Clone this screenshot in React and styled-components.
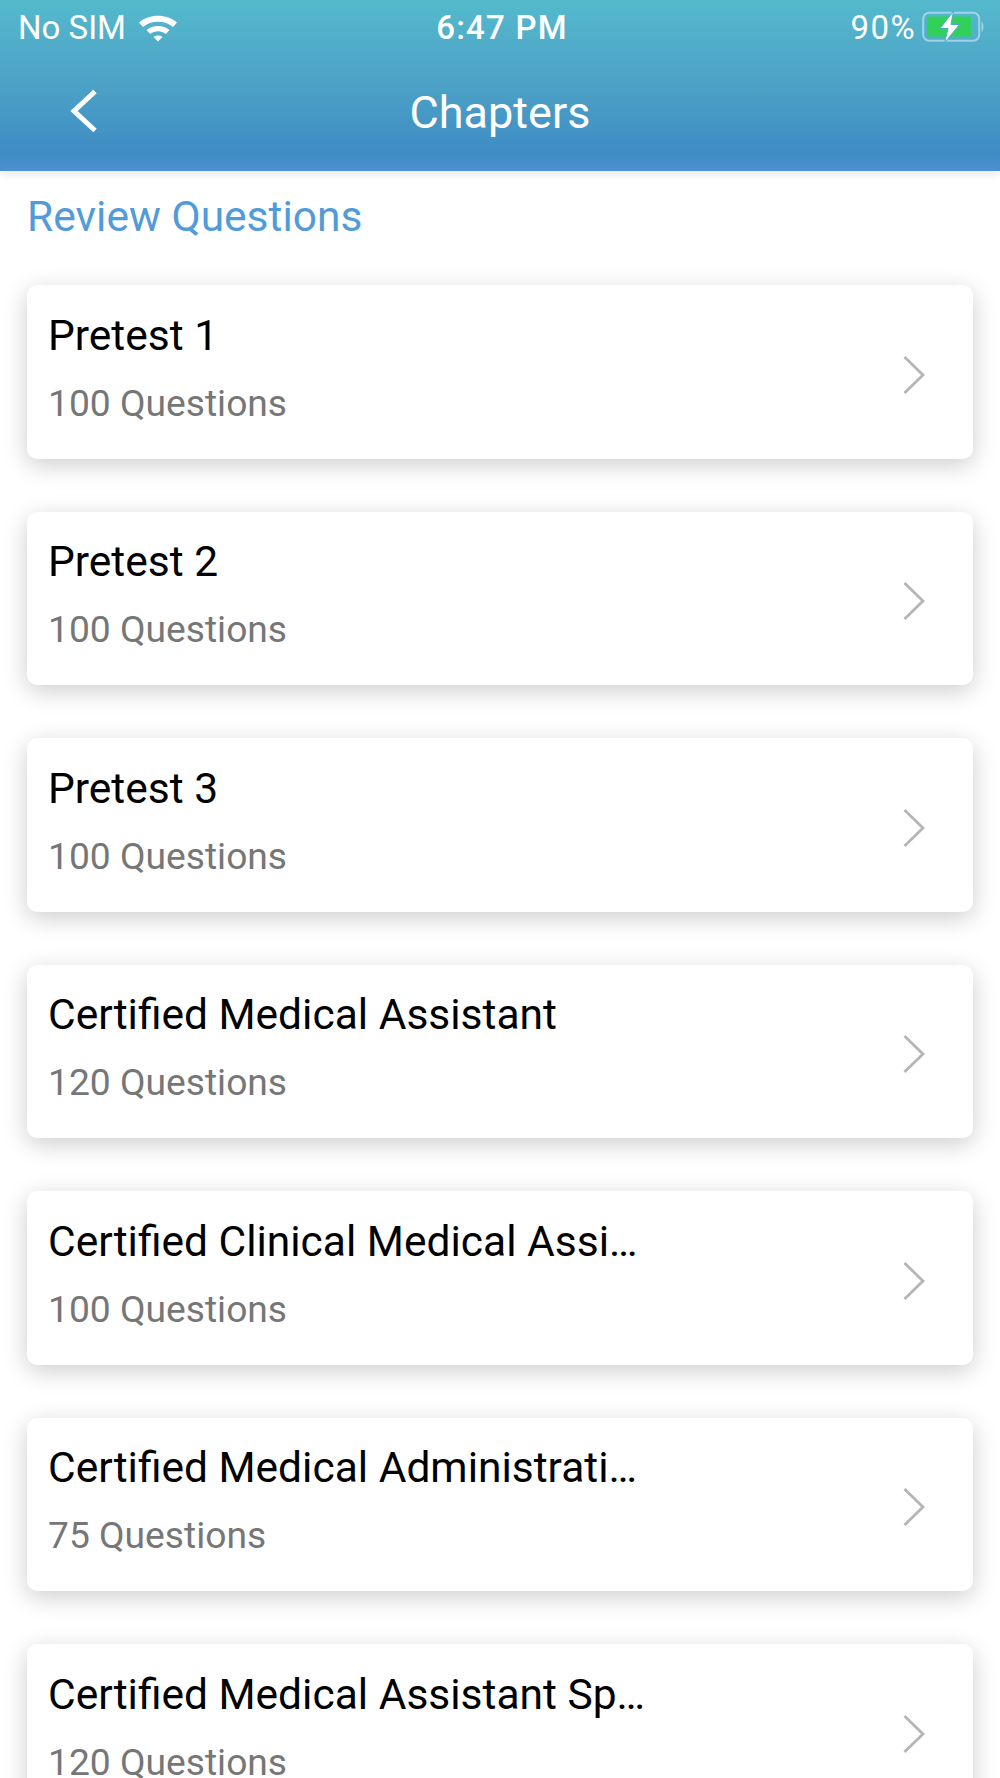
import React from "react";
import styled, { createGlobalStyle } from "styled-components";

const chapters = [
  { title: "Pretest 1", count: "100 Questions" },
  { title: "Pretest 2", count: "100 Questions" },
  { title: "Pretest 3", count: "100 Questions" },
  { title: "Certified Medical Assistant", count: "120 Questions" },
  { title: "Certified Clinical Medical Assi…", count: "100 Questions" },
  { title: "Certified Medical Administrati…", count: "75 Questions" },
  { title: "Certified Medical Assistant Sp…", count: "120 Questions" },
];

const App = () => {
  return (
    <Page>
      <GlobalStyle />
      <Header>
        <StatusBar>
          <StatusLeft>
            <span>No SIM</span>
            <svg width="40" height="30" viewBox="0 0 40 30">
              <path
                d="M1 10.5C11 1.5 29 1.5 39 10.5L35 15C27 8 13 8 5 15Z"
                fill="#fff"
              />
              <path
                d="M8.5 18C15 12.6 25 12.6 31.5 18L27.8 22C23 18.4 17 18.4 12.2 22Z"
                fill="#fff"
              />
              <path d="M15.5 25C18 23 22 23 24.5 25L20 29.5Z" fill="#fff" />
            </svg>
          </StatusLeft>
          <Clock>6:47 PM</Clock>
          <StatusRight>
            <BatteryText>90%</BatteryText>
            <svg width="64" height="32" viewBox="0 0 64 32">
              <rect
                x="1.2"
                y="1.8"
                width="56"
                height="28"
                rx="6"
                fill="none"
                stroke="rgba(255,255,255,0.45)"
                strokeWidth="2"
              />
              <rect x="5" y="5.5" width="44" height="20" rx="2" fill="#30d158" />
              <path d="M59.5 10.5C62 11.5 62 20 59.5 21Z" fill="rgba(255,255,255,0.45)" />
              <path
                d="M31.5 0L18 17.5H26L22.5 32L37.5 13.5H29Z"
                fill="#fff"
                stroke="#4fa9c6"
                strokeWidth="1"
              />
            </svg>
          </StatusRight>
        </StatusBar>
        <NavBar>
          <BackButton>
            <svg width="30" height="44" viewBox="0 0 30 44">
              <path
                d="M27 2.5L6 22L27 41.5"
                fill="none"
                stroke="#fff"
                strokeWidth="5"
              />
            </svg>
          </BackButton>
          <NavTitle>Chapters</NavTitle>
        </NavBar>
      </Header>

      <Content>
        <SectionTitle>Review Questions</SectionTitle>
        <List>
          {chapters.map((chapter, i) => (
            <Card key={i}>
              <div>
                <CardTitle>{chapter.title}</CardTitle>
                <CardCount>{chapter.count}</CardCount>
              </div>
              <Chevron width="24" height="40" viewBox="0 0 24 40">
                <path
                  d="M2.5 2L21 20L2.5 38"
                  fill="none"
                  stroke="#b5b5b5"
                  strokeWidth="2.8"
                />
              </Chevron>
            </Card>
          ))}
        </List>
      </Content>
    </Page>
  );
};

export default App;

const GlobalStyle = createGlobalStyle`
  html, body {
    margin: 0;
    padding: 0;
    background: #fff;
  }
`;

const Page = styled.div`
  width: 1000px;
  height: 1778px;
  overflow: hidden;
  font-family: Roboto, "Liberation Sans", sans-serif;
  background: #fff;
`;

const Header = styled.header`
  position: relative;
  height: 171px;
  box-sizing: border-box;
  background: linear-gradient(180deg, #55b9cd 0%, #4da4c6 45%, #3f8cc5 90%, #4a90d0 100%);
  box-shadow: 0 2px 10px rgba(0, 0, 0, 0.12);
  color: #fff;
`;

const StatusBar = styled.div`
  display: grid;
  grid-template-columns: 1fr auto 1fr;
  align-items: center;
  height: 54px;
  padding: 0 14px 0 18px;
  font-size: 33px;
`;

const StatusLeft = styled.div`
  display: flex;
  align-items: center;
  gap: 12px;
`;

const Clock = styled.div`
  font-weight: 500;
  letter-spacing: 1.2px;
`;

const StatusRight = styled.div`
  display: flex;
  align-items: center;
  justify-content: flex-end;
  gap: 6px;
`;

const BatteryText = styled.span`
  font-size: 33px;
  letter-spacing: 1.4px;
`;

const NavBar = styled.div`
  display: flex;
  align-items: center;
  height: 117px;
  position: relative;
  justify-content: center;
  box-sizing: border-box;
`;

const BackButton = styled.div`
  position: absolute;
  left: 68px;
  top: 35px;
  display: flex;
`;

const NavTitle = styled.div`
  font-size: 45px;
`;

const Content = styled.main`
  padding: 22px 27px 0;
`;

const SectionTitle = styled.div`
  font-size: 42.5px;
  line-height: 48px;
  color: #519bd8;
`;

const List = styled.div`
  display: flex;
  flex-direction: column;
  gap: 53px;
  margin-top: 44px;
`;

const Card = styled.div`
  flex: none;
  height: 173.5px;
  box-sizing: border-box;
  display: flex;
  align-items: center;
  justify-content: space-between;
  padding: 0 47px 0 21px;
  background: #fff;
  border-radius: 10px;
  box-shadow: 0 6px 24px rgba(0, 0, 0, 0.2);
`;

const CardTitle = styled.div`
  font-size: 42.5px;
  line-height: 50px;
  color: #000;
  margin-top: -7px;
`;

const CardCount = styled.div`
  font-size: 37.2px;
  line-height: 46px;
  margin-top: 19px;
  color: #767676;
`;

const Chevron = styled.svg`
  margin-top: 6px;
`;
